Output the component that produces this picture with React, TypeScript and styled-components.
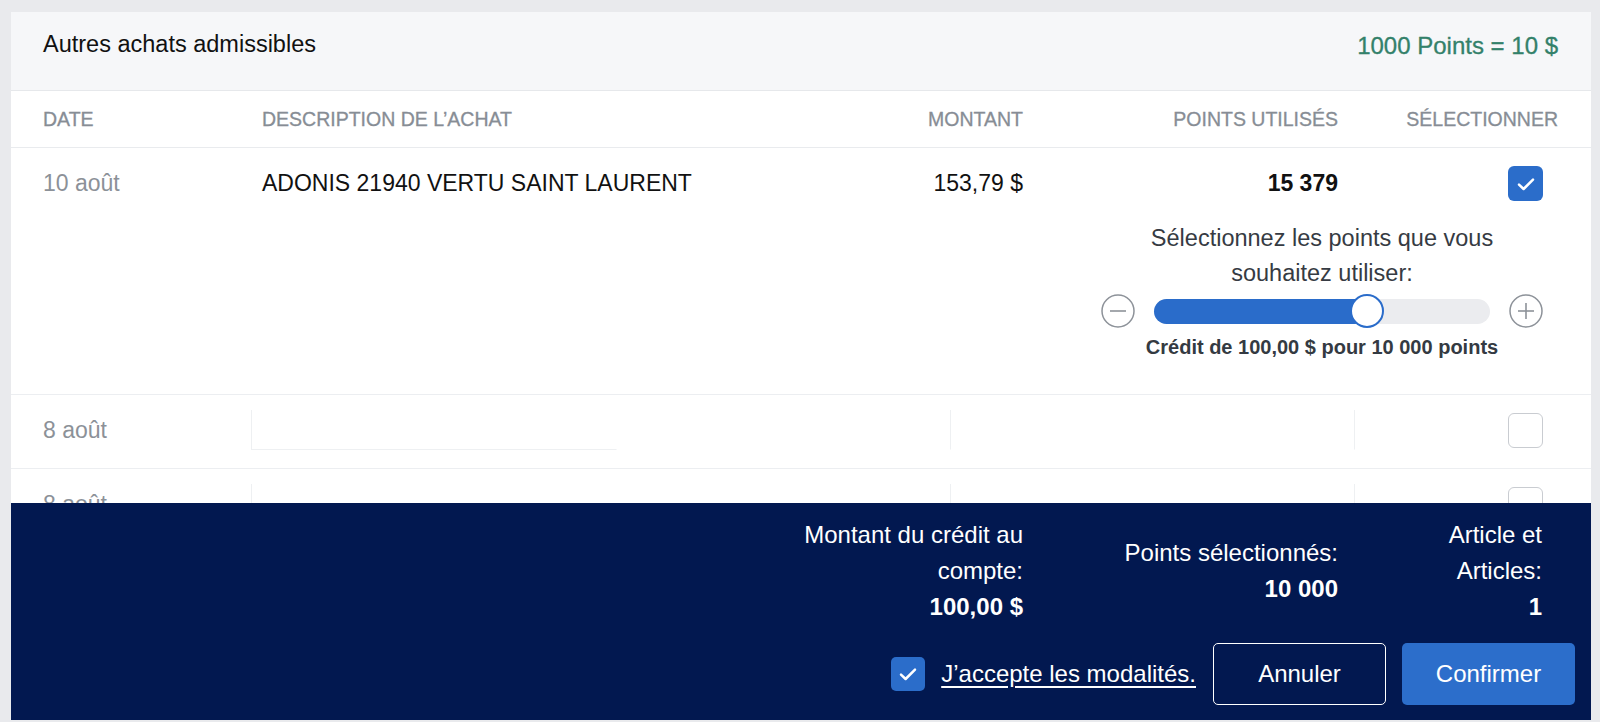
import styled, { createGlobalStyle } from "styled-components";

const GlobalStyle = createGlobalStyle`
  html, body {
    margin: 0;
    padding: 0;
    height: 100%;
  }
  body {
    background: #e9eaed;
    font-family: "Liberation Sans", Arial, Helvetica, sans-serif;
    overflow: hidden;
  }
  #root {
    height: 100%;
  }
  * {
    box-sizing: border-box;
  }
`;

const COLUMNS = "219px 1fr 240px 315px 220px";

type Purchase = {
  date: string;
  description?: string;
  amount?: string;
  points?: string;
  selected: boolean;
};

const purchases: Purchase[] = [
  { date: "10 août", description: "ADONIS 21940 VERTU SAINT LAURENT", amount: "153,79 $", points: "15 379", selected: true },
  { date: "8 août", selected: false },
  { date: "8 août", selected: false },
];

function CheckIcon() {
  return (
    <svg width="24" height="24" viewBox="0 0 24 24" fill="none">
      <path d="M5 12.6l4.6 4.4L19 7.6" stroke="#fff" strokeWidth="2.5" strokeLinecap="round" strokeLinejoin="round" />
    </svg>
  );
}

function RoundIcon({ plus }: { plus?: boolean }) {
  return (
    <svg width="34" height="34" viewBox="0 0 34 34" fill="none">
      <circle cx="17" cy="17" r="16" stroke="#8d9299" strokeWidth="1.5" />
      <path d="M9 17h16" stroke="#8d9299" strokeWidth="1.6" />
      {plus && <path d="M17 9v16" stroke="#8d9299" strokeWidth="1.6" />}
    </svg>
  );
}

function PointsSlider({ value, max }: { value: number; max: number }) {
  const pct = value / max;
  return (
    <SliderRow>
      <RoundButton aria-label="moins">
        <RoundIcon />
      </RoundButton>
      <Track>
        <Fill style={{ width: `calc(${pct} * (100% - 34px) + 17px)` }} />
        <Thumb style={{ left: `calc(${pct} * (100% - 34px))` }} />
      </Track>
      <RoundButton aria-label="plus">
        <RoundIcon plus />
      </RoundButton>
    </SliderRow>
  );
}

export default function App() {
  return (
    <>
      <GlobalStyle />
      <Page>
        <Card>
          <CardHeader>
            <Title>Autres achats admissibles</Title>
            <Rate>1000 Points = 10 $</Rate>
          </CardHeader>

          <HeadRow>
            <HeadCell>Date</HeadCell>
            <HeadCell>Description de l’achat</HeadCell>
            <HeadCell $align="right">Montant</HeadCell>
            <HeadCell $align="right">Points utilisés</HeadCell>
            <HeadCell $align="right">Sélectionner</HeadCell>
          </HeadRow>

          <TableBody>
            {purchases.map((p, i) => (
              <Row key={i}>
                <DateCell>{p.date}</DateCell>
                {p.description ? (
                  <>
                    <TextCell>{p.description}</TextCell>
                    <TextCell $align="right">{p.amount}</TextCell>
                    <TextCell $align="right" $bold>
                      {p.points}
                    </TextCell>
                  </>
                ) : (
                  <SkeletonStrip>
                    <Skeleton $width={366} $bottom />
                    <Skeleton $width={333} $none />
                    <Skeleton $width={405} $right />
                  </SkeletonStrip>
                )}
                <Checkbox $checked={p.selected}>{p.selected && <CheckIcon />}</Checkbox>

                {p.selected && (
                  <Expansion>
                    <Caption>Sélectionnez les points que vous souhaitez utiliser:</Caption>
                    <PointsSlider value={10000} max={15379} />
                    <Credit>Crédit de 100,00 $ pour 10 000 points</Credit>
                  </Expansion>
                )}
              </Row>
            ))}
          </TableBody>

          <Footer>
            <Summary>
              <SummaryItem $col={3}>
                Montant du crédit au compte:
                <strong>100,00 $</strong>
              </SummaryItem>
              <SummaryItem $col={4}>
                Points sélectionnés:
                <strong>10 000</strong>
              </SummaryItem>
              <SummaryItem $col={5} $narrow>
                Article et Articles:
                <strong>1</strong>
              </SummaryItem>
            </Summary>
            <Actions>
              <Terms>
                <SmallCheck>
                  <CheckIcon />
                </SmallCheck>
                <TermsLink href="#">J’accepte les modalités.</TermsLink>
              </Terms>
              <Button>Annuler</Button>
              <Button $primary>Confirmer</Button>
            </Actions>
          </Footer>
        </Card>
      </Page>
    </>
  );
}

const Page = styled.div`
  height: 100vh;
  padding: 12px 9px 2px 11px;
  display: flex;
`;

const Card = styled.section`
  flex: 1;
  display: flex;
  flex-direction: column;
  background: #fff;
  overflow: hidden;
`;

const CardHeader = styled.header`
  display: flex;
  justify-content: space-between;
  align-items: flex-start;
  padding: 18px 33px 30px 32px;
  background: #f6f7f9;
  border-bottom: 1px solid #e6e8eb;
`;

const Title = styled.h2`
  margin: 0;
  font-size: 23.5px;
  line-height: 28px;
  font-weight: 400;
  color: #111;
`;

const Rate = styled.span`
  margin-top: 2px;
  font-size: 24px;
  line-height: 28px;
  color: #33816a;
  -webkit-text-stroke: 0.3px currentColor;
`;

const HeadRow = styled.div`
  display: grid;
  grid-template-columns: ${COLUMNS};
  padding: 17px 33px 17px 32px;
  border-bottom: 1px solid #e9ebee;
`;

const HeadCell = styled.div<{ $align?: "right" }>`
  font-size: 19.5px;
  line-height: 22px;
  text-transform: uppercase;
  color: #878d95;
  -webkit-text-stroke: 0.3px currentColor;
  text-align: ${(p) => p.$align ?? "left"};
`;

const TableBody = styled.div`
  flex: 1;
  min-height: 0;
  overflow: hidden;
`;

const Row = styled.div`
  display: grid;
  grid-template-columns: ${COLUMNS};
  align-items: start;
  padding: 18px 33px 18px 32px;
  border-bottom: 1px solid #eceef1;
`;

const DateCell = styled.div`
  font-size: 23px;
  line-height: 34px;
  color: #8c9198;
`;

const TextCell = styled.div<{ $align?: "right"; $bold?: boolean }>`
  font-size: 23px;
  line-height: 34px;
  color: #111;
  text-align: ${(p) => p.$align ?? "left"};
  font-weight: ${(p) => (p.$bold ? 700 : 400)};
`;

const SkeletonStrip = styled.div`
  grid-column: 2 / 5;
  display: flex;
  margin-left: -11px;
  margin-top: -3px;
  height: 40px;
`;

const Skeleton = styled.div<{ $width: number; $bottom?: boolean; $right?: boolean; $none?: boolean }>`
  flex: 0 0 ${(p) => p.$width}px;
  border-left: 1px solid ${(p) => (p.$none ? "transparent" : "#eef0f2")};
  border-right: 1px solid ${(p) => (p.$right ? "#eef0f2" : "transparent")};
  border-bottom: 1px solid ${(p) => (p.$bottom ? "#eef0f2" : "transparent")};
`;

const Checkbox = styled.div<{ $checked: boolean }>`
  grid-column: 5;
  justify-self: end;
  margin-right: 15px;
  width: 35px;
  height: 35px;
  border-radius: 6px;
  display: flex;
  align-items: center;
  justify-content: center;
  background: ${(p) => (p.$checked ? "#2b6dca" : "#fff")};
  border: ${(p) => (p.$checked ? "none" : "1.5px solid #c9ccd1")};
`;

const Expansion = styled.div`
  grid-column: 4 / 6;
  justify-self: end;
  width: 442px;
  margin: 20px 15px 17px 0;
  display: flex;
  flex-direction: column;
  align-items: center;
`;

const Caption = styled.p`
  margin: 0;
  width: 360px;
  text-align: center;
  font-size: 23.5px;
  line-height: 35px;
  color: #363b43;
`;

const SliderRow = styled.div`
  align-self: stretch;
  display: flex;
  align-items: center;
  gap: 19px;
  margin-top: 3px;
`;

const RoundButton = styled.button`
  width: 34px;
  height: 34px;
  padding: 0;
  border: none;
  background: none;
  display: flex;
  cursor: pointer;
`;

const Track = styled.div`
  flex: 1;
  height: 25px;
  border-radius: 13px;
  background: #ebecef;
  position: relative;
`;

const Fill = styled.div`
  height: 100%;
  border-radius: 13px;
  background: #2a6cca;
`;

const Thumb = styled.div`
  position: absolute;
  top: 50%;
  width: 34px;
  height: 34px;
  margin-top: -17px;
  border-radius: 50%;
  background: #fff;
  border: 2px solid #2a6cca;
`;

const Credit = styled.p`
  margin: 7px 0 0;
  font-size: 20px;
  line-height: 24px;
  font-weight: 700;
  color: #343a42;
`;

const Footer = styled.footer`
  background: #021850;
  color: #fff;
  padding: 14px 16px 15px 32px;
`;

const Summary = styled.div`
  display: grid;
  grid-template-columns: ${COLUMNS};
  align-items: center;
  padding-right: 17px;
`;

const SummaryItem = styled.div<{ $col: number; $narrow?: boolean }>`
  grid-column: ${(p) => p.$col};
  justify-self: end;
  text-align: right;
  font-size: 24px;
  line-height: 36px;
  width: ${(p) => (p.$narrow ? "150px" : "auto")};
  margin-right: ${(p) => (p.$narrow ? "16px" : "0")};

  & strong {
    display: block;
    font-weight: 700;
  }
`;

const Actions = styled.div`
  display: flex;
  justify-content: flex-end;
  align-items: center;
  gap: 16px;
  margin-top: 18px;
`;

const Terms = styled.label`
  display: flex;
  align-items: center;
  gap: 16px;
  margin-right: 1px;
`;

const SmallCheck = styled.span`
  width: 34px;
  height: 34px;
  border-radius: 5px;
  background: #2b6dca;
  display: flex;
  align-items: center;
  justify-content: center;
`;

const TermsLink = styled.a`
  color: #fff;
  font-size: 24px;
  line-height: 28px;
  text-decoration: underline;
  text-underline-offset: 4px;
`;

const Button = styled.button<{ $primary?: boolean }>`
  width: 173px;
  height: 62px;
  border-radius: 5px;
  font-family: inherit;
  font-size: 24px;
  color: #fff;
  cursor: pointer;
  background: ${(p) => (p.$primary ? "#2c6ecb" : "transparent")};
  border: ${(p) => (p.$primary ? "none" : "1.5px solid #fff")};
`;
